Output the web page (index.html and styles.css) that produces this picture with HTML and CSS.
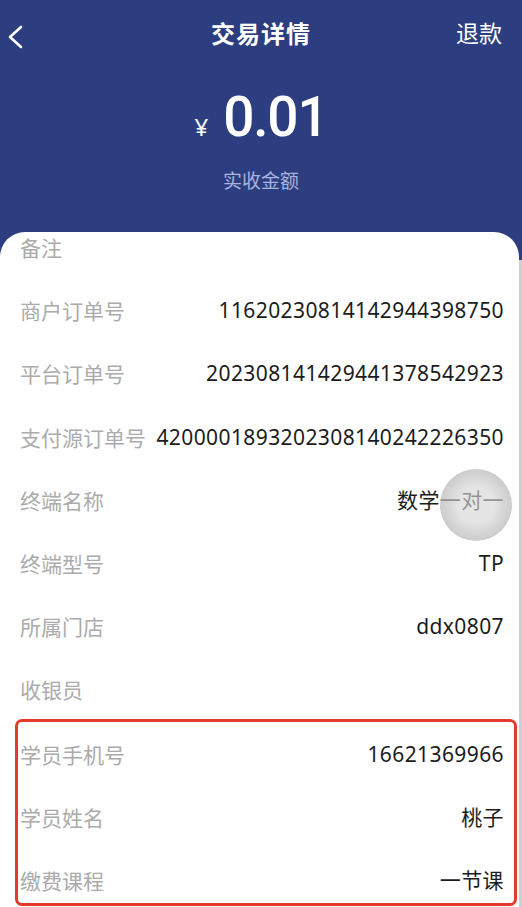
FILE: index.html
```html
<!DOCTYPE html>
<html lang="zh-CN">
<head>
<meta charset="utf-8">
<title>交易详情</title>
<link rel="stylesheet" href="styles.css">
</head>
<body>
<div class="page">
  <header class="hero">
    <nav class="nav">
      <span class="back">
        <svg width="16" height="24" viewBox="0 0 16 24"><polyline points="13,2 2,12 13,22" fill="none" stroke="#fff" stroke-width="2.6" stroke-linecap="round" stroke-linejoin="round"/></svg>
      </span>
      <span class="title">交易详情</span>
      <span class="action">退款</span>
    </nav>
    <div class="amount"><span class="yen">¥</span><span class="num">0.01</span></div>
    <div class="sub">实收金额</div>
  </header>
  <main class="card">
    <div class="row first"><span class="label">备注</span><span class="value"></span></div>
    <div class="row"><span class="label">商户订单号</span><span class="value">11620230814142944398750</span></div>
    <div class="row"><span class="label">平台订单号</span><span class="value">202308141429441378542923</span></div>
    <div class="row"><span class="label">支付源订单号</span><span class="value">4200001893202308140242226350</span></div>
    <div class="row"><span class="label">终端名称</span><span class="value">数学一对一</span></div>
    <div class="row"><span class="label">终端型号</span><span class="value">TP</span></div>
    <div class="row"><span class="label">所属门店</span><span class="value">ddx0807</span></div>
    <div class="row"><span class="label">收银员</span><span class="value"></span></div>
    <div class="highlight">
      <div class="row"><span class="label">学员手机号</span><span class="value">16621369966</span></div>
      <div class="row"><span class="label">学员姓名</span><span class="value">桃子</span></div>
      <div class="row last"><span class="label">缴费课程</span><span class="value">一节课</span></div>
    </div>
  </main>
  <div class="float-btn"></div>
</div>
</body>
</html>
```
FILE: styles.css
```css
* { box-sizing: border-box; }
html, body { margin: 0; padding: 0; }
body {
  width: 522px;
  height: 907px;
  overflow: hidden;
  font-family: "Noto Sans CJK SC", "Noto Sans", sans-serif;
  background: linear-gradient(#2d3e80 0 260px, #cfcfcf 260px);
}
.page { position: relative; width: 522px; }
.hero {
  height: 232px;
  background: #2d3e80;
  color: #fff;
  padding-top: 10px;
}
.nav {
  height: 44px;
  display: grid;
  grid-template-columns: 1fr auto 1fr;
  align-items: center;
}
.back { padding-left: 8px; padding-top: 10px; display: flex; align-items: center; }
.title { font-size: 24px; font-weight: 700; letter-spacing: 1px; }
.action { justify-self: end; padding-right: 20px; font-size: 23px; }
.amount {
  margin-top: 33px;
  height: 60px;
  display: flex;
  justify-content: center;
  align-items: baseline;
  gap: 15px;
}
.yen { font-family: "Noto Sans", sans-serif; font-size: 24px; }
.num { font-family: Roboto, sans-serif; font-size: 55px; font-weight: 500; letter-spacing: -1.2px; line-height: 60px; }
.sub {
  margin-top: 20px;
  text-align: center;
  font-size: 19px;
  line-height: 26px;
  color: #a8b3de;
}
.card {
  width: 519px;
  height: 675px;
  background: #fff;
  border-radius: 25px 25px 0 0;
  padding: 0 15px 0 20px;
}
.row {
  display: flex;
  justify-content: space-between;
  align-items: center;
  height: 63.2px;
  font-size: 21px;
  line-height: 30px;
}
.row.first { height: 46.6px; align-items: flex-start; }
.label { color: #ababab; white-space: nowrap; }
.value { color: #1c1c1c; white-space: nowrap; font-family: "Noto Sans", "Noto Sans CJK SC", sans-serif; letter-spacing: 0.4px; }
.highlight {
  margin: -2px -13px 0 -5px;
  border: 3px solid #e6392c;
  border-radius: 7px;
  padding: 0 10px 0 2px;
}
.row.last { height: 55px; align-items: flex-start; padding-top: 16.6px; }
.float-btn {
  position: absolute;
  left: 440px;
  top: 469px;
  width: 72px;
  height: 72px;
  border-radius: 50%;
  background: radial-gradient(circle, rgba(214,214,214,0.64) 0 35%, rgba(200,200,200,0.68) 50%, rgba(185,185,185,0.72) 70%, rgba(172,172,172,0.76) 100%);
}
```
